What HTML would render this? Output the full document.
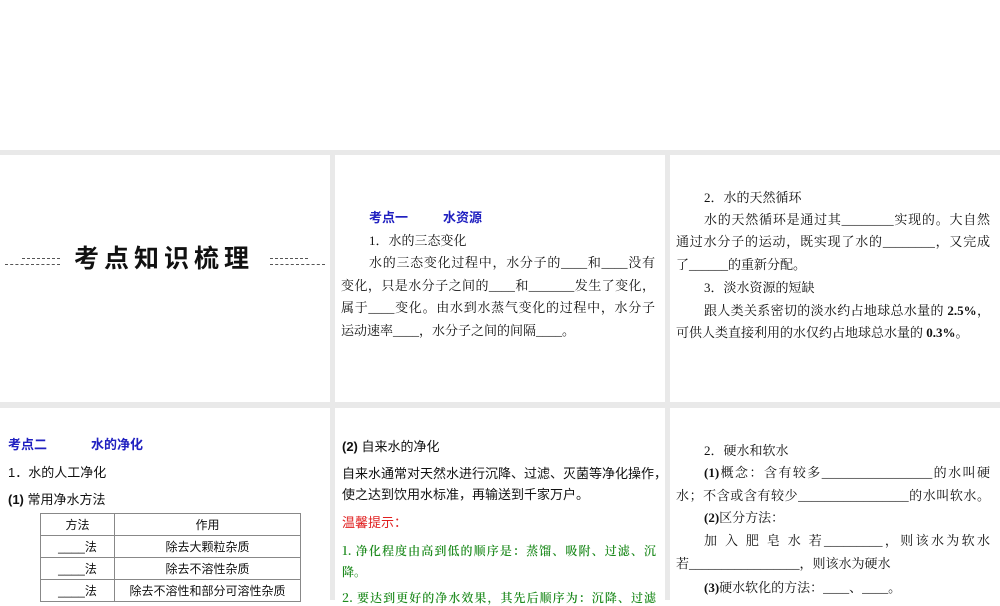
<!DOCTYPE html>
<html><head><meta charset="utf-8"><style>
body{margin:0;width:1000px;height:600px;overflow:hidden;background:#fff;position:relative;font-family:"Liberation Serif","Noto Serif CJK SC",serif;color:#111}
.g{position:absolute;background:#e9e9e9}
.t{position:absolute;font-size:13px;line-height:16px;white-space:nowrap}
.j{text-align:justify;text-align-last:justify}
.s{font-family:"Liberation Sans","Noto Sans CJK SC",sans-serif}
.b{color:#2020c0;font-weight:bold;font-family:"Liberation Sans","Noto Sans CJK SC",sans-serif;font-size:13px}
.gr{color:#1d8a1d;font-family:"Noto Serif CJK SC",serif;font-weight:600;font-size:12px}
table{position:absolute;left:40px;top:513px;border-collapse:collapse;font-family:"Liberation Sans","Noto Sans CJK SC",sans-serif;font-size:12px}
td{border:1px solid #888;height:21px;padding:0;text-align:center}
</style></head><body>
<div class="g" style="left:0;top:150px;width:1000px;height:5px"></div>
<div class="g" style="left:0;top:402px;width:1000px;height:6px"></div>
<div class="g" style="left:330px;top:150px;width:5px;height:450px"></div>
<div class="g" style="left:665px;top:150px;width:5px;height:450px"></div>

<div style="position:absolute;left:5px;top:264px;width:55px;border-top:1px dashed #555"></div>
<div style="position:absolute;left:22px;top:258px;width:38px;border-top:1px dashed #555"></div>
<div style="position:absolute;left:270px;top:264px;width:55px;border-top:1px dashed #555"></div>
<div style="position:absolute;left:270px;top:258px;width:38px;border-top:1px dashed #555"></div>
<div class="t s" style="left:74px;top:244px;font-size:25px;line-height:30px;font-weight:bold;letter-spacing:5px">考点知识梳理</div>

<div class="t b" style="left:369px;top:210px">考点一</div>
<div class="t b" style="left:443px;top:210px">水资源</div>
<div class="t" style="left:369px;top:233px">1．水的三态变化</div>
<div class="t j" style="left:369px;top:255px;width:286px">水的三态变化过程中，水分子的____和____没有</div>
<div class="t j" style="left:341px;top:278px;width:314px">变化，只是水分子之间的____和_______发生了变化，</div>
<div class="t j" style="left:341px;top:300px;width:314px">属于____变化。由水到水蒸气变化的过程中，水分子</div>
<div class="t" style="left:341px;top:323px">运动速率____，水分子之间的间隔____。</div>

<div class="t" style="left:704px;top:190px">2．水的天然循环</div>
<div class="t j" style="left:704px;top:212px;width:286px">水的天然循环是通过其________实现的。大自然</div>
<div class="t j" style="left:676px;top:234px;width:314px">通过水分子的运动，既实现了水的________，又完成</div>
<div class="t" style="left:676px;top:257px">了______的重新分配。</div>
<div class="t" style="left:704px;top:280px">3．淡水资源的短缺</div>
<div class="t j" style="left:704px;top:303px;width:286px">跟人类关系密切的淡水约占地球总水量的 <b>2.5%</b>，</div>
<div class="t" style="left:676px;top:325px">可供人类直接利用的水仅约占地球总水量的 <b>0.3%</b>。</div>

<div class="t b" style="left:8px;top:437px">考点二</div>
<div class="t b" style="left:91px;top:437px">水的净化</div>
<div class="t s" style="left:8px;top:465px">1．水的人工净化</div>
<div class="t s" style="left:8px;top:492px"><b>(1)</b> 常用净水方法</div>
<table>
<tr><td style="width:73px">方法</td><td style="width:185px">作用</td></tr>
<tr><td>____法</td><td>除去大颗粒杂质</td></tr>
<tr><td>____法</td><td>除去不溶性杂质</td></tr>
<tr><td>____法</td><td>除去不溶性和部分可溶性杂质</td></tr>
</table>

<div class="t s" style="left:342px;top:439px"><b>(2)</b> 自来水的净化</div>
<div class="t s j" style="left:342px;top:466px;width:320px">自来水通常对天然水进行沉降、过滤、灭菌等净化操作，</div>
<div class="t s" style="left:342px;top:487px">使之达到饮用水标准，再输送到千家万户。</div>
<div class="t s" style="left:342px;top:515px;color:#e02020">温馨提示：</div>
<div class="t gr j" style="left:342px;top:543px;width:314px">1. 净化程度由高到低的顺序是：蒸馏、吸附、过滤、沉</div>
<div class="t gr" style="left:342px;top:564px">降。</div>
<div class="t gr j" style="left:342px;top:590px;width:314px">2. 要达到更好的净水效果，其先后顺序为：沉降、过滤</div>

<div class="t" style="left:704px;top:443px">2．硬水和软水</div>
<div class="t j" style="left:704px;top:465px;width:286px"><b>(1)</b>概念：含有较多_________________的水叫硬</div>
<div class="t j" style="left:676px;top:488px;width:314px">水；不含或含有较少_________________的水叫软水。</div>
<div class="t" style="left:704px;top:510px"><b>(2)</b>区分方法：</div>
<div class="t j" style="left:704px;top:533px;width:286px">加 入 肥 皂 水 若_________，则该水为软水</div>
<div class="t" style="left:676px;top:556px">若_________________，则该水为硬水</div>
<div class="t" style="left:704px;top:580px"><b>(3)</b>硬水软化的方法：____、____。</div>
</body></html>
